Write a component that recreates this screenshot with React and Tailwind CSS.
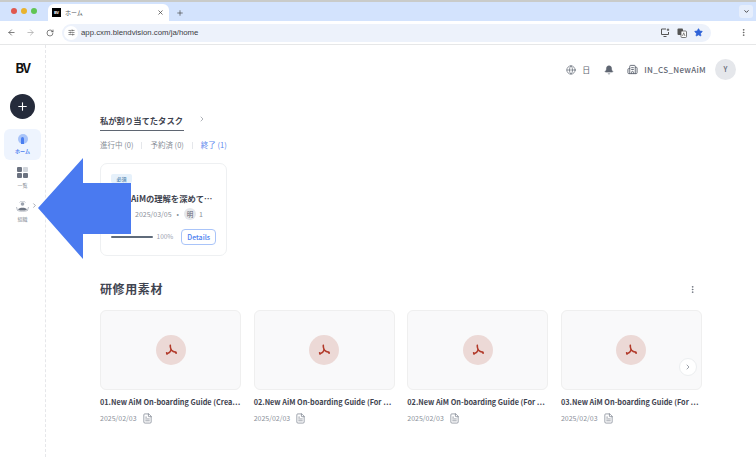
import { ArrowLeft, ArrowRight, RotateCw, X, Plus, ChevronDown, ChevronRight, SlidersHorizontal, Star, EllipsisVertical, Globe, Bell, Building2, FileText } from 'lucide-react'

const files = [
  '01.New AiM On-boarding Guide (Crea…',
  '02.New AiM On-boarding Guide (For …',
  '02.New AiM On-boarding Guide (For …',
  '03.New AiM On-boarding Guide (For …',
]

const PdfIcon = () => (
  <svg width="14" height="14" viewBox="0 0 14 14" fill="none" stroke="#b23a2a" strokeWidth="1.6" strokeLinecap="round" strokeLinejoin="round">
    <path d="M6.300 2.300C6 4 6.600 5.500 7.200 7" />
    <path d="M7.200 7C6.500 8.800 5.200 10 3 10.800" />
    <path d="M7.200 7C8.500 8.300 10 9 11.800 9.300" />
    <path d="M3 10.800 2.600 9.800M11.800 9.300 12.100 10.200" />
  </svg>
)

const FileCard = ({ title }) => (
  <div className="w-[141px] shrink-0">
    <div className="h-[80px] rounded-md border border-[#efefef] bg-[#f9f9fa] flex items-center justify-center">
      <div className="w-[30px] h-[30px] rounded-full bg-[#ecd9d6] flex items-center justify-center">
        <PdfIcon />
      </div>
    </div>
    <p className="mt-[5px] text-[7.300px] leading-[14px] font-bold text-[#3f4450] whitespace-nowrap">{title}</p>
    <div className="mt-[2px] flex items-center gap-[5px] text-[7px] leading-[14px] text-[#8a8f99]">
      <span>2025/02/03</span>
      <FileText size={11} strokeWidth={1.4} className="text-[#6b7280]" />
    </div>
  </div>
)

const App = () => {
  return (
    <div className="relative w-[756px] h-[457px] overflow-hidden bg-white font-['Noto_Sans_CJK_JP',sans-serif]">
      {/* browser frame */}
      <div className="h-[2px] bg-[#c9cbc9]" />
      <div className="h-[19px] bg-[#d3e3fd] flex items-end pl-[48px] pr-[3px] relative">
        <div className="absolute left-[11px] top-[6px] flex gap-[4px]">
          <span className="w-[6px] h-[6px] rounded-full bg-[#e0584f]" />
          <span className="w-[6px] h-[6px] rounded-full bg-[#e8b32e]" />
          <span className="w-[6px] h-[6px] rounded-full bg-[#61c554]" />
        </div>
        <div className="w-[121px] h-[17px] bg-white rounded-t-md flex items-center pl-[4px] pr-[5px]">
          <span className="w-[9px] h-[9px] bg-black text-white text-[4px] leading-[9px] font-bold text-center">BV</span>
          <span className="ml-[4px] text-[6px] text-[#555a60]">ホーム</span>
          <X size={7} strokeWidth={2.5} className="ml-auto text-[#444]" />
        </div>
        <Plus size={8} strokeWidth={2} className="ml-[7px] mb-[4px] text-[#444]" />
        <div className="ml-auto mb-[3px] w-[14px] h-[13px] rounded-[3px] bg-[#e6eefc] flex items-center justify-center">
          <ChevronDown size={7} strokeWidth={3} className="text-[#333]" />
        </div>
      </div>
      <div className="h-[24px] bg-white border-b border-[#e6e7e8] flex items-center pl-[7px] pr-[8px]">
        <ArrowLeft size={9} className="text-[#555]" />
        <ArrowRight size={9} className="ml-[10px] text-[#aaa]" />
        <RotateCw size={8} className="ml-[11px] text-[#444]" />
        <div className="ml-[8px] w-[649px] h-[18px] bg-[#edf2fb] rounded-full flex items-center pl-[2px] pr-[8px]">
          <span className="w-[14px] h-[14px] rounded-full bg-white flex items-center justify-center">
            <SlidersHorizontal size={7} className="text-[#444]" />
          </span>
          <span className="ml-[3px] text-[7.800px] text-[#3c4043] font-['Liberation_Sans',sans-serif]">app.cxm.blendvision.com/ja/home</span>
          <svg className="ml-auto" width="10" height="9" viewBox="0 0 10 9" fill="none" stroke="#555" strokeWidth="1">
            <path d="M6 1H1.500V6.500H8.500V4" />
            <path d="M3.500 8.500H6.500" />
            <path d="M8 .5V3M6.800 1.800H9.200" />
          </svg>
          <svg className="ml-[7px]" width="10" height="10" viewBox="0 0 10 10">
            <rect x="0.500" y="0.500" width="5.500" height="6.500" rx="1" fill="#555" />
            <rect x="4" y="3" width="5.500" height="6.500" rx="1" fill="#fff" stroke="#555" strokeWidth="0.800" />
            <path d="M5.500 8 6.700 4.800 8 8" fill="none" stroke="#555" strokeWidth="0.700" />
          </svg>
          <Star size={9} fill="#2f63d8" className="ml-[7px] text-[#2f63d8]" />
        </div>
        <EllipsisVertical size={9} className="ml-auto text-[#555]" />
      </div>

      <div className="flex h-[412px]">
        {/* sidebar */}
        <aside className="w-[46px] shrink-0 border-r border-dashed border-[#e6e7ea] flex flex-col items-center">
          <div className="mt-[15px] text-[13px] leading-[16px] font-bold text-[#111] tracking-[-1px]">BV</div>
          <div className="mt-[18px] w-[25px] h-[25px] rounded-full bg-[#252b3b] flex items-center justify-center">
            <Plus size={13} strokeWidth={2} className="text-white" />
          </div>
          <div className="mt-[10px] w-[37px] h-[31px] rounded-md bg-[#eef4fe] flex flex-col items-center pt-[5px]">
            <div className="w-[10px] h-[10px] rounded-full bg-[#a9c4f9] flex items-end justify-center">
              <span className="w-[3px] h-[7px] bg-[#4a7ef0] rounded-t-full" />
            </div>
            <span className="mt-[3px] text-[5px] leading-[8px] font-bold text-[#4a7ef0]">ホーム</span>
          </div>
          <div className="mt-[7px] grid grid-cols-2 gap-[1px]">
            <span className="w-[5px] h-[5px] rounded-[1px] bg-[#6b7280]" />
            <span className="w-[5px] h-[5px] rounded-[1px] bg-[#d1d5db]" />
            <span className="w-[5px] h-[5px] rounded-[1px] bg-[#6b7280]" />
            <span className="w-[5px] h-[5px] rounded-[1px] bg-[#6b7280]" />
          </div>
          <span className="mt-[3px] text-[5px] leading-[8px] text-[#8a8f99]">一覧</span>
          <div className="mt-[12px] relative w-[13px] h-[11px]">
            <svg width="13" height="11" viewBox="0 0 13 11" fill="none">
              <circle cx="6.500" cy="3" r="1.800" fill="#9ca3af" />
              <path d="M3.500 1.500C4 .700 5 .300 6.500 .300S9 .700 9.500 1.500" stroke="#9ca3af" strokeWidth="0.600" />
              <path d="M2 8.500C3 6 10 6 11 8.500L9 9.500H4Z" fill="#6b7280" />
              <path d="M.500 6 1.500 9.500C3 10.500 10 10.500 11.500 9.500L12.500 6" stroke="#9ca3af" strokeWidth="0.700" />
            </svg>
            <ChevronRight size={7} className="absolute left-[15px] top-[1px] text-[#6b7280]" />
          </div>
          <span className="mt-[3px] text-[5px] leading-[8px] text-[#8a8f99]">組織</span>
        </aside>

        {/* main */}
        <main className="flex-1 min-w-0 pl-[54px] pr-[54px]">
          <div className="h-[48px] pt-[1px] -mr-[34px] flex items-center justify-end text-[#5f6672]">
            <Globe size={10} strokeWidth={1.6} />
            <span className="ml-[6px] text-[8px] leading-none">日</span>
            <Bell size={10} fill="#5f6672" strokeWidth={1.4} className="ml-[14px]" />
            <Building2 size={11} strokeWidth={2} className="ml-[13px]" />
            <span className="ml-[6px] text-[8px] leading-none font-medium tracking-[0.3px]">IN_CS_NewAiM</span>
            <span className="ml-[9px] w-[21px] h-[21px] rounded-full bg-[#e5e7eb] flex items-center justify-center text-[7px] font-medium">Y</span>
          </div>

          <div className="mt-[21px] flex items-start">
            <div className="w-[84px] h-[17px] border-b-[1.500px] border-[#5f6672] text-[8.300px] leading-[13px] font-bold text-[#3f4450] whitespace-nowrap">私が割り当てたタスク</div>
            <ChevronRight size={8} strokeWidth={1.5} className="ml-[14px] mt-[1px] text-[#5f6672]" />
          </div>

          <div className="mt-[8px] flex items-center text-[7.500px] leading-[12px] text-[#8a8f99]">
            <span>進行中 (0)</span>
            <span className="mx-[8px] w-px h-[7px] bg-[#e5e7eb]" />
            <span>予約済 (0)</span>
            <span className="mx-[8px] w-px h-[7px] bg-[#e5e7eb]" />
            <span className="text-[#5b87ee]">終了 (1)</span>
          </div>

          <div className="mt-[12px] w-[127px] h-[93px] rounded-[7px] border border-[#eef0f2] px-[10px] pt-[10px]">
            <span className="block w-[21px] h-[9px] rounded-[2px] bg-[#e6f1fb] text-[5px] leading-[9px] text-center font-medium text-[#4d7fae]">必須</span>
            <p className="mt-[8px] text-[8.300px] leading-[14px] font-bold text-[#3f4450] whitespace-nowrap">New AiMの理解を深めて…</p>
            <div className="mt-[3px] flex items-center text-[7px] leading-[12px] text-[#8a8f99]">
              <span className="w-[24px]">期</span>
              <span>2025/03/05</span>
              <span className="mx-[5px]">•</span>
              <span className="w-[12px] h-[12px] rounded-full bg-[#e5e7eb] text-center text-[6.500px] text-[#5f6672]">明</span>
              <span className="ml-[3px]">1</span>
            </div>
            <div className="mt-[9px] flex items-center">
              <span className="w-[42px] h-[2px] rounded-full bg-[#5f6b7a]" />
              <span className="ml-[4px] text-[6.500px] text-[#9ca3af]">100%</span>
              <span className="ml-[8px] w-[35px] h-[16px] rounded-[4px] border border-[#a9c4f9] text-[7px] leading-[14px] text-center font-medium text-[#4a7ef0]">Details</span>
            </div>
          </div>

          <div className="mt-[23px] pr-[5px] flex items-center justify-between">
            <h2 className="text-[12px] leading-[20px] font-bold text-[#3f4450] tracking-[0.6px]">研修用素材</h2>
            <EllipsisVertical size={9} className="text-[#5f6672]" />
          </div>

          <div className="mt-[11px] relative flex gap-[12.670px]">
            {files.map((title, i) => (
              <FileCard key={i} title={title} />
            ))}
            <span className="absolute left-[579px] top-[48px] w-[18px] h-[18px] rounded-full bg-white border border-[#eceef0] flex items-center justify-center">
              <ChevronRight size={8} className="text-[#6b7280]" />
            </span>
          </div>
        </main>
      </div>

      {/* callout arrow */}
      <svg className="absolute left-0 top-0" width="756" height="457" viewBox="0 0 756 457">
        <path d="M38 208 83 158V183H131V234H83V259Z" fill="#4a7af0" />
      </svg>
    </div>
  )
}

export default App
